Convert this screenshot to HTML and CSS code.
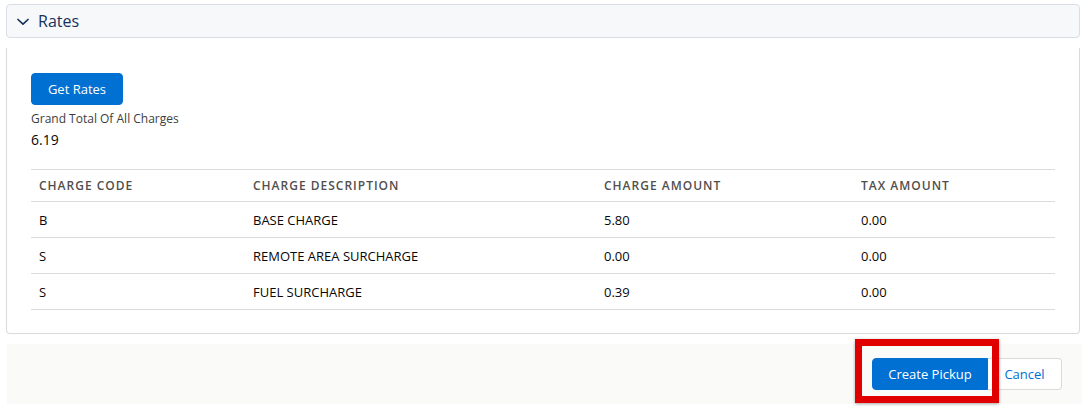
FILE: index.html
```html
<!DOCTYPE html>
<html>
<head>
<meta charset="utf-8">
<link rel="stylesheet" href="styles.css">
</head>
<body>
<div class="page">
  <div class="section-title">
    <svg class="chev" width="12" height="8" viewBox="0 0 12 8"><path d="M1 1.5 L6 6.2 L11 1.5" fill="none" stroke="#16325c" stroke-width="1.7" stroke-linecap="round" stroke-linejoin="round"/></svg>
    <span class="title-text">Rates</span>
  </div>
  <div class="card">
    <button class="btn-brand get-rates">Get Rates</button>
    <div class="label">Grand Total Of All Charges</div>
    <div class="value">6.19</div>
    <table class="rates">
      <colgroup>
        <col class="c1"><col class="c2"><col class="c3"><col class="c4">
      </colgroup>
      <thead>
        <tr><th>Charge Code</th><th>Charge Description</th><th>Charge Amount</th><th>Tax Amount</th></tr>
      </thead>
      <tbody>
        <tr><td>B</td><td>BASE CHARGE</td><td>5.80</td><td>0.00</td></tr>
        <tr><td>S</td><td>REMOTE AREA SURCHARGE</td><td>0.00</td><td>0.00</td></tr>
        <tr><td>S</td><td>FUEL SURCHARGE</td><td>0.39</td><td>0.00</td></tr>
      </tbody>
    </table>
  </div>
  <div class="footer">
    <div class="btn-group">
      <button class="btn-brand create">Create Pickup</button>
      <button class="btn-neutral cancel">Cancel</button>
      <div class="highlight"></div>
    </div>
  </div>
</div>
</body>
</html>
```
FILE: styles.css
```css
* { box-sizing: border-box; }
html, body { margin: 0; padding: 0; background: #fff; }
body { font-family: "Open Sans", "Noto Sans", sans-serif; color: #080707; }
.page { width: 1082px; height: 408px; padding-top: 4px; overflow: hidden; }
.section-title {
  margin-left: 6px; width: 1074px; height: 34px;
  background: #f7f8fa; border: 1px solid #d8dde6; border-radius: 4px;
  display: flex; align-items: center; padding-left: 10px;
}
.chev { margin-right: 9px; margin-top: 1px; }
.title-text { font-size: 16px; color: #16325c; line-height: 1; }
.card {
  margin-left: 6px; margin-top: 10px; width: 1074px; height: 286px;
  border: 1px solid #dddbda; border-top: none; border-radius: 0 0 4px 4px;
  padding: 25px 23px 0 24px;
}
.btn-brand {
  background: #0070d2; color: #fff; border: 1px solid #0070d2;
  border-radius: 4px; font-family: inherit; font-size: 13px; height: 32px; padding: 0 16px;
}
.get-rates { width: 92px; padding: 0; display: block; }
.label { font-size: 12px; color: #3e3e3c; margin-top: 6px; line-height: 16px; }
.value { font-size: 14px; margin-top: 3px; line-height: 20px; }
.rates {
  margin-top: 19px; width: 1024px; border-collapse: collapse;
  border-top: 1px solid #dddbda; font-size: 13px;
}
.c1 { width: 214px; } .c2 { width: 351px; } .c3 { width: 257px; } .c4 { width: 202px; }
.rates th {
  text-align: left; font-weight: 600; font-size: 12px; letter-spacing: 1px;
  text-transform: uppercase; color: #514f4d; height: 32px; padding: 0 8px;
  border-bottom: 1px solid #dddbda;
}
.rates td { height: 36px; padding: 0 8px; border-bottom: 1px solid #dddbda; color: #080707; }
.footer {
  margin-left: 7px; margin-top: 10px; width: 1075px; height: 60px;
  background: #fafaf9; display: flex; justify-content: flex-end; align-items: center;
  padding-right: 20px;
}
.btn-group { display: flex; position: relative; }
.create { width: 116px; padding: 0; border-radius: 4px 0 0 4px; }
.cancel {
  width: 74px; height: 32px; background: #fff; color: #0070d2; font-family: inherit; font-size: 13px;
  border: 1px solid #dddbda; border-left: none; border-radius: 0 4px 4px 0;
}
.highlight {
  position: absolute; left: -17px; top: -19px; width: 144px; height: 64px;
  border: 7px solid #e00000; box-shadow: 0 1px 3px rgba(0,0,0,0.35);
}
```
